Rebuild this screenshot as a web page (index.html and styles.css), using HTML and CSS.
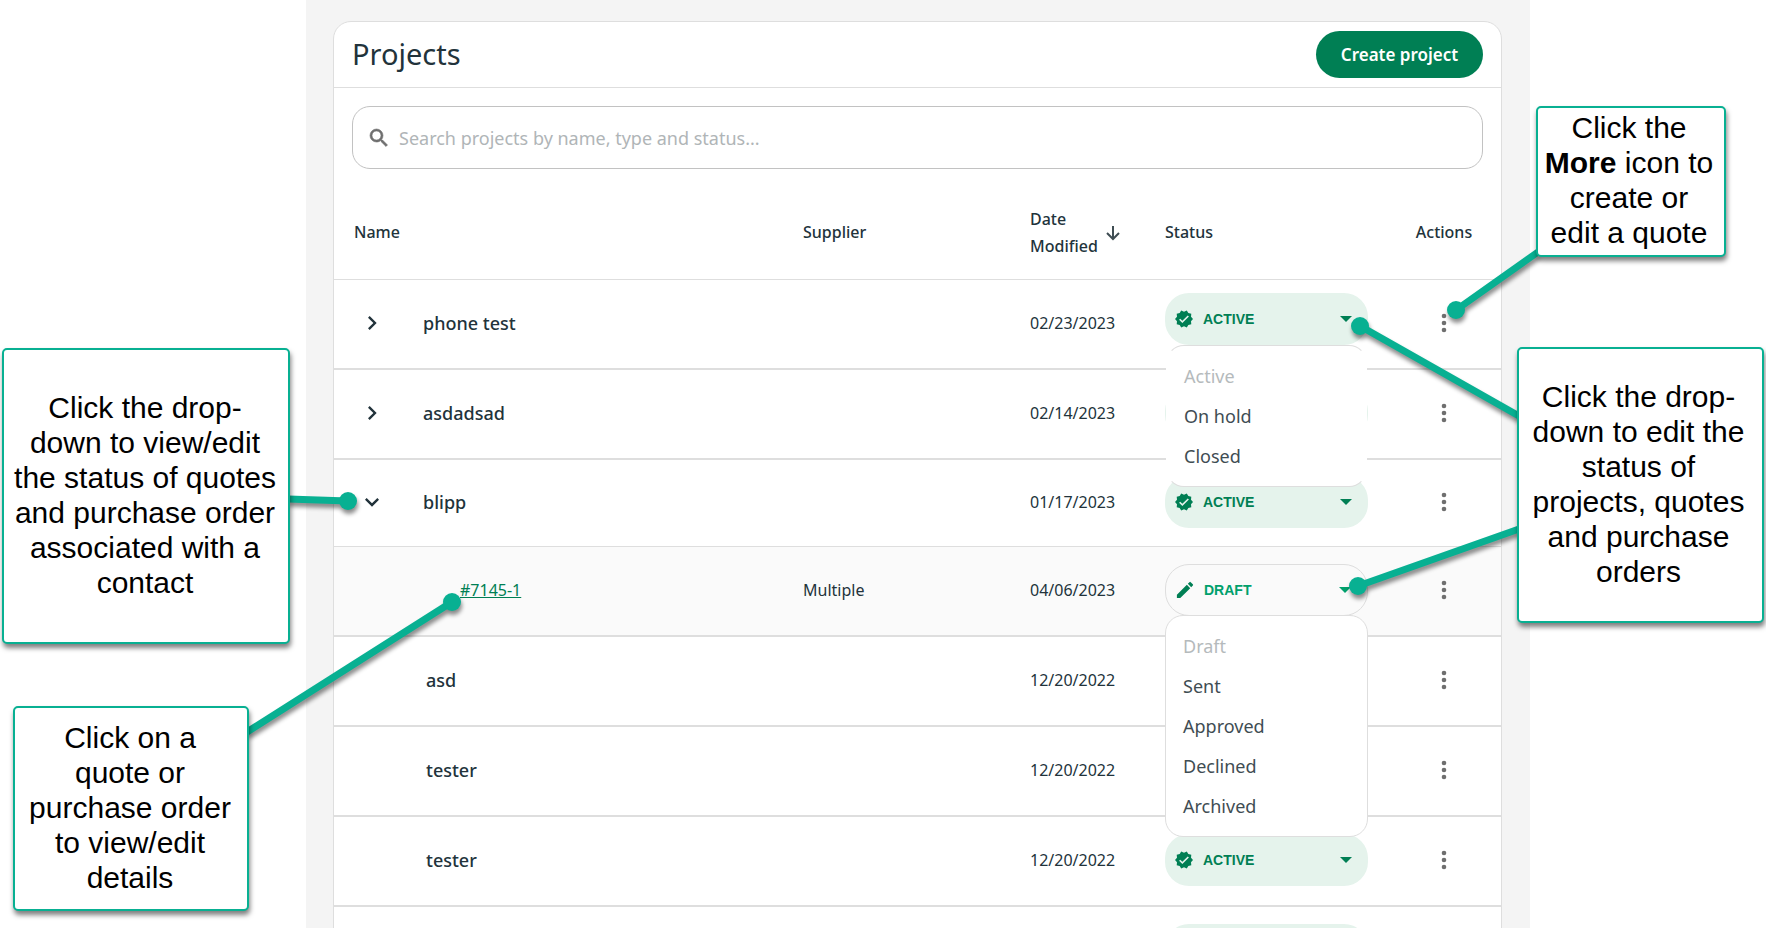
FILE: index.html
```html
<!DOCTYPE html>
<html lang="en">
  <head>
    <meta charset="UTF-8" />
    <meta name="viewport" content="width=device-width, initial-scale=1.0" />
    <title>Projects</title>
    <link rel="stylesheet" href="styles.css" />
  </head>
  <body>
    <!-- shared icons -->
    <svg class="sprite" aria-hidden="true">
      <symbol id="i-verified" viewBox="1 1 22 22">
        <path d="M23 12l-2.44-2.78.34-3.68-3.61-.82-1.89-3.18L12 3 8.6 1.54 6.71 4.72l-3.61.81.34 3.68L1 12l2.44 2.78-.34 3.69 3.61.82 1.89 3.18L12 21l3.4 1.46 1.89-3.18 3.61-.82-.34-3.68L23 12zm-13 5l-4-4 1.41-1.41L10 14.17l6.59-6.59L18 9l-8 8z" />
      </symbol>
      <symbol id="i-edit" viewBox="2 2 20 20">
        <path d="M3 17.25V21h3.75L17.81 9.94l-3.75-3.75L3 17.25zM20.71 7.04a1 1 0 0 0 0-1.41l-2.34-2.34a1 1 0 0 0-1.41 0l-1.83 1.83 3.75 3.75 1.83-1.83z" />
      </symbol>
      <symbol id="i-caret" viewBox="0 0 12 6"><path d="M0 0h12L6 6z" /></symbol>
      <symbol id="i-more" viewBox="0 0 6 20">
        <circle cx="3" cy="3" r="2.3" /><circle cx="3" cy="10" r="2.3" /><circle cx="3" cy="17" r="2.3" />
      </symbol>
      <symbol id="i-chevron" viewBox="0 0 24 24">
        <path d="M8.59 16.59L13.17 12 8.59 7.41 10 6l6 6-6 6z" />
      </symbol>
    </svg>

    <main class="app">
      <section class="card">
        <header class="card-header">
          <h1>Projects</h1>
          <button class="btn-create" type="button">Create project</button>
        </header>

        <div class="search">
          <svg viewBox="0 0 24 24" aria-hidden="true">
            <path d="M15.5 14h-.79l-.28-.27A6.47 6.47 0 0 0 16 9.5 6.5 6.5 0 1 0 9.5 16c1.61 0 3.09-.59 4.23-1.57l.27.28v.79l5 4.99L20.49 19l-4.99-5zm-6 0C7.01 14 5 11.99 5 9.5S7.01 5 9.5 5 14 7.01 14 9.5 11.99 14 9.5 14z" />
          </svg>
          <input type="search" aria-label="Search projects" placeholder="Search projects by name, type and status..." />
        </div>

        <table class="projects">
          <colgroup>
            <col />
            <col class="col-supplier" />
            <col class="col-date" />
            <col class="col-status" />
            <col class="col-actions" />
          </colgroup>
          <thead>
            <tr>
              <th scope="col">Name</th>
              <th scope="col">Supplier</th>
              <th scope="col" aria-sort="descending">
                <span class="sort">
                  <span>Date Modified</span>
                  <svg viewBox="0 0 14 16" aria-hidden="true"><path d="M7 1v13M1 8l6 6 6-6" /></svg>
                </span>
              </th>
              <th scope="col">Status</th>
              <th scope="col" class="actions">Actions</th>
            </tr>
          </thead>
          <tbody>
            <tr>
              <td>
                <div class="name">
                  <button class="toggle" type="button" aria-label="Expand phone test"><svg><use href="#i-chevron" /></svg></button>
                  phone test
                </div>
              </td>
              <td></td>
              <td>02/23/2023</td>
              <td class="is-raised">
                <div class="status">
                  <svg class="status-icon"><use href="#i-verified" /></svg>
                  <select aria-label="Status of phone test"><option>ACTIVE</option></select>
                  <svg class="caret"><use href="#i-caret" /></svg>
                  <ul class="menu menu-project">
                    <li><button type="button" disabled>Active</button></li>
                    <li><button type="button">On hold</button></li>
                    <li><button type="button">Closed</button></li>
                  </ul>
                </div>
              </td>
              <td class="actions"><button class="more" type="button" aria-label="More"><svg><use href="#i-more" /></svg></button></td>
            </tr>
            <tr>
              <td>
                <div class="name">
                  <button class="toggle" type="button" aria-label="Expand asdadsad"><svg><use href="#i-chevron" /></svg></button>
                  asdadsad
                </div>
              </td>
              <td></td>
              <td>02/14/2023</td>
              <td>
                <div class="status">
                  <svg class="status-icon"><use href="#i-verified" /></svg>
                  <select aria-label="Status of asdadsad"><option>ACTIVE</option></select>
                  <svg class="caret"><use href="#i-caret" /></svg>
                </div>
              </td>
              <td class="actions"><button class="more" type="button" aria-label="More"><svg><use href="#i-more" /></svg></button></td>
            </tr>
            <tr class="is-expanded">
              <td>
                <div class="name">
                  <button class="toggle" type="button" aria-label="Collapse blipp" aria-expanded="true"><svg><use href="#i-chevron" /></svg></button>
                  blipp
                </div>
              </td>
              <td></td>
              <td>01/17/2023</td>
              <td>
                <div class="status">
                  <svg class="status-icon"><use href="#i-verified" /></svg>
                  <select aria-label="Status of blipp"><option>ACTIVE</option></select>
                  <svg class="caret"><use href="#i-caret" /></svg>
                </div>
              </td>
              <td class="actions"><button class="more" type="button" aria-label="More"><svg><use href="#i-more" /></svg></button></td>
            </tr>
            <tr class="quote">
              <td><a class="quote-link" href="#7145-1">#7145-1</a></td>
              <td>Multiple</td>
              <td>04/06/2023</td>
              <td>
                <div class="status status-draft">
                  <svg class="status-icon"><use href="#i-edit" /></svg>
                  <select aria-label="Status of #7145-1"><option>DRAFT</option></select>
                  <svg class="caret"><use href="#i-caret" /></svg>
                  <ul class="menu menu-quote">
                    <li><button type="button" disabled>Draft</button></li>
                    <li><button type="button">Sent</button></li>
                    <li><button type="button">Approved</button></li>
                    <li><button type="button">Declined</button></li>
                    <li><button type="button">Archived</button></li>
                  </ul>
                </div>
              </td>
              <td class="actions"><button class="more" type="button" aria-label="More"><svg><use href="#i-more" /></svg></button></td>
            </tr>
            <tr>
              <td><div class="name name-plain">asd</div></td>
              <td></td>
              <td>12/20/2022</td>
              <td></td>
              <td class="actions"><button class="more" type="button" aria-label="More"><svg><use href="#i-more" /></svg></button></td>
            </tr>
            <tr>
              <td><div class="name name-plain">tester</div></td>
              <td></td>
              <td>12/20/2022</td>
              <td></td>
              <td class="actions"><button class="more" type="button" aria-label="More"><svg><use href="#i-more" /></svg></button></td>
            </tr>
            <tr>
              <td><div class="name name-plain">tester</div></td>
              <td></td>
              <td>12/20/2022</td>
              <td>
                <div class="status">
                  <svg class="status-icon"><use href="#i-verified" /></svg>
                  <select aria-label="Status of tester"><option>ACTIVE</option></select>
                  <svg class="caret"><use href="#i-caret" /></svg>
                </div>
              </td>
              <td class="actions"><button class="more" type="button" aria-label="More"><svg><use href="#i-more" /></svg></button></td>
            </tr>
            <tr>
              <td></td>
              <td></td>
              <td></td>
              <td><div class="status"></div></td>
              <td></td>
            </tr>
          </tbody>
        </table>
      </section>
    </main>

    <!-- callout lines, one drawing per side so they stay with their boxes -->
    <svg class="lines lines-left" viewBox="0 0 480 928" aria-hidden="true">
      <path d="M288 499L348 501M247 732L452 602" />
      <circle cx="348" cy="501" r="9" />
      <circle cx="452" cy="602" r="9" />
    </svg>
    <svg class="lines lines-right" viewBox="0 0 426 928" aria-hidden="true">
      <path d="M198 252L116 310M179 416L20 326M179 529L18 586" />
      <circle cx="116" cy="310" r="9" />
      <circle cx="20" cy="326" r="9" />
      <circle cx="18" cy="586" r="9" />
    </svg>

    <aside class="callout callout-expand">
      <p>Click the drop-<br />down to view/edit the status of quotes and purchase order associated with a contact</p>
    </aside>
    <aside class="callout callout-quote">
      <p>Click on a quote or purchase order to view/edit details</p>
    </aside>
    <aside class="callout callout-more">
      <p>Click the <strong>More</strong> icon to create or edit&nbsp;a quote</p>
    </aside>
    <aside class="callout callout-status">
      <p>Click the drop-down to edit the status of projects, quotes and purchase orders</p>
    </aside>
  </body>
</html>
```
FILE: styles.css
```css
* {
  box-sizing: border-box;
  margin: 0;
  padding: 0;
}
body {
  position: relative;
  height: 100vh;
  overflow: hidden;
  background-color: #fff;
  color: #22333b;
  font-family: "Noto Sans", "Open Sans", sans-serif;
  font-size: 16px;
}
button,
input,
select {
  border: 0;
  background: none;
  color: inherit;
  font: inherit;
}
.sprite {
  display: none;
}

.app {
  height: 100%;
  margin: 0 236px 0 306px;
  padding: 21px 28px 0 27px;
  overflow: hidden;
  background-color: #f4f4f4;
}
.card {
  border: 1px solid #dedede;
  border-radius: 18px 18px 0 0;
  background-color: #fff;
}
.card-header {
  display: flex;
  align-items: center;
  justify-content: space-between;
  height: 66px;
  padding: 0 18px;
  border-bottom: 1px solid #dedede;
}
h1 {
  padding-bottom: 2px;
  font-size: 29px;
  font-weight: 400;
}
.btn-create {
  min-width: 167px;
  height: 47px;
  padding: 0 22px;
  border-radius: 24px;
  background-color: #007f54;
  color: #fff;
  font-size: 17px;
  font-weight: 600;
}
.search {
  display: flex;
  align-items: center;
  gap: 8px;
  height: 63px;
  margin: 18px 18px 0 18px;
  padding: 0 14px;
  border: 1px solid #c2c2c2;
  border-radius: 18px;
}
.search svg {
  width: 24px;
  height: 24px;
  fill: #6f6f6f;
  stroke: #6f6f6f;
  stroke-width: 0.6;
}
.search input {
  flex: 1;
  outline: 0;
  font-size: 18px;
}
.search input::placeholder {
  color: #b0b5b7;
}

.projects {
  width: 100%;
  border-collapse: separate;
  border-spacing: 0;
  table-layout: fixed;
}
.col-supplier {
  width: 227px;
}
.col-date {
  width: 135px;
}
.col-status {
  width: 242px;
}
.col-actions {
  width: 114px;
}
th {
  height: 111px;
  padding: 17px 0 0 20px;
  border-bottom: 1px solid #dedede;
  font-weight: 500;
  line-height: 27px;
  text-align: left;
}
td {
  height: 90px;
  padding-bottom: 2px;
  padding-left: 20px;
  border-bottom: 2px solid #dedede;
}
.is-expanded td {
  height: 87px;
  border-bottom-width: 1px;
}
.quote td {
  background-color: #fafafa;
}
th.actions,
td.actions {
  padding-left: 0;
  text-align: center;
}
.sort {
  display: flex;
  align-items: center;
  gap: 8px;
}
.sort > span {
  width: 68px;
}
.sort svg {
  width: 14px;
  height: 16px;
  fill: none;
  stroke: #3f4d53;
  stroke-width: 2;
}

.name {
  display: flex;
  align-items: center;
  gap: 41px;
  font-size: 18px;
  font-weight: 500;
}
.name-plain {
  padding-left: 72px;
}
.toggle {
  width: 28px;
  height: 28px;
  padding-left: 4px;
}
.toggle svg {
  display: block;
  width: 28px;
  height: 28px;
  fill: #22333b;
}
.toggle[aria-expanded] svg {
  transform: rotate(90deg);
}
.quote-link {
  margin-left: 106px;
  color: #007f54;
}
.more {
  display: block;
  width: 32px;
  height: 32px;
  margin: 0 auto;
}
.more svg {
  display: block;
  width: 6px;
  height: 20px;
  margin: 0 auto;
  fill: #6f6f6f;
}

.status {
  position: relative;
  display: flex;
  align-items: center;
  width: 203px;
  height: 52px;
  padding: 0 10px;
  border-radius: 24px;
  background-color: #e5f3ec;
  color: #007f54;
  fill: #007f54;
}
.status-draft {
  border: 1px solid #dedede;
  background-color: #fafafa;
  color: #00a06c;
}
.status-draft .caret {
  fill: #00a06c;
}
.is-raised {
  padding-top: 13px;
  vertical-align: top;
}
.status-icon {
  width: 18px;
  height: 18px;
}
.status select {
  flex: 1;
  height: 100%;
  padding-left: 10px;
  appearance: none;
  outline: 0;
  font: bold 14px "Liberation Sans", sans-serif;
}
.caret {
  width: 12px;
  height: 6px;
  margin-right: 6px;
}
.menu {
  position: absolute;
  top: 100%;
  z-index: 1;
  padding: 10px 0;
  border: 1px solid #dedede;
  border-radius: 18px;
  background-color: #fff;
  list-style: none;
}
.menu-project {
  right: 1px;
  left: 1px;
  border-right-color: transparent;
  border-left-color: transparent;
}
.menu-quote {
  right: -1px;
  left: -1px;
}
.menu button {
  width: 100%;
  height: 40px;
  padding-left: 17px;
  color: #3f4d53;
  font-size: 18px;
  text-align: left;
}
.menu button:disabled {
  color: #b5babc;
}

.callout {
  position: absolute;
  z-index: 3;
  display: flex;
  align-items: center;
  justify-content: center;
  border: 2px solid #08b092;
  border-radius: 5px;
  background-color: #fff;
  box-shadow: 1px 4px 5px rgba(0, 0, 0, 0.5);
  color: #000;
  font: 30px/35px "Liberation Sans", Arial, sans-serif;
  text-align: center;
}
.callout-expand {
  top: 348px;
  left: 2px;
  width: 288px;
  height: 296px;
  padding: 0 8px 2px 6px;
}
.callout-quote {
  top: 706px;
  left: 13px;
  width: 236px;
  height: 205px;
  padding: 0 12px 2px 10px;
}
.callout-more {
  top: 106px;
  right: 40px;
  width: 190px;
  height: 151px;
  padding: 0 4px 4px 0;
}
.callout-status {
  top: 347px;
  right: 2px;
  width: 247px;
  height: 276px;
  padding: 0 12px 2px 8px;
}
.lines {
  position: absolute;
  top: 0;
  z-index: 2;
  height: 928px;
  fill: #08b092;
  filter: drop-shadow(1px 4px 2px rgba(0, 0, 0, 0.45));
  pointer-events: none;
}
.lines path {
  stroke: #08b092;
  stroke-width: 7;
}
.lines-left {
  left: 0;
  width: 480px;
}
.lines-right {
  right: 0;
  width: 426px;
}
```
